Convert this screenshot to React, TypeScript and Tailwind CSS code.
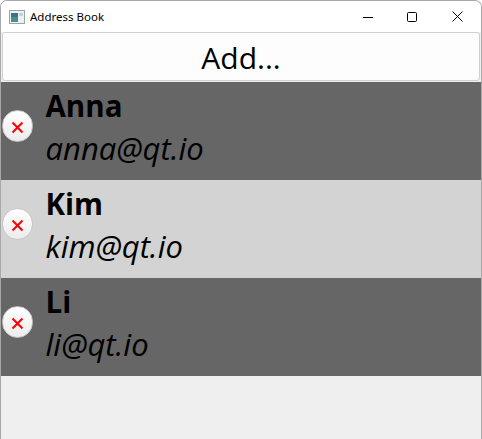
const FONT = "font-['Open_Sans','Noto_Sans',sans-serif]";

const contacts = [
  { name: "Anna", email: "anna@qt.io", bg: "bg-[#666666]" },
  { name: "Kim", email: "kim@qt.io", bg: "bg-[#d3d3d3]" },
  { name: "Li", email: "li@qt.io", bg: "bg-[#666666]" },
];

function AppIcon() {
  return (
    <svg width="16" height="14" viewBox="0 0 16 14">
      <rect x="0.5" y="0.5" width="15" height="13" fill="#eef1f1" stroke="#9aa5a8" />
      <rect x="2" y="3" width="7" height="9" fill="#4f8f88" />
      <rect x="2" y="3" width="7" height="4" fill="#3f6f8f" />
      <rect x="10" y="3" width="4" height="3" fill="#c4d2d2" />
    </svg>
  );
}

function TitleBar() {
  return (
    <div className="flex h-[31px] items-center bg-white">
      <div className="ml-[8px] flex w-[21px] items-center">
        <AppIcon />
      </div>
      <span className="font-['Noto_Sans',sans-serif] text-[11.5px] text-black">Address Book</span>
      <div className="ml-auto flex items-center">
        <svg className="mr-[34px]" width="10" height="10" viewBox="0 0 10 10">
          <path d="M0 5.5H10" stroke="#000" strokeWidth="1" />
        </svg>
        <svg className="mr-[35px]" width="10" height="10" viewBox="0 0 10 10">
          <rect x="0.5" y="0.5" width="9" height="9" rx="1" fill="none" stroke="#000" />
        </svg>
        <svg className="mr-[18px]" width="11" height="11" viewBox="0 0 11 11">
          <path d="M0.5 0.5L10.5 10.5M10.5 0.5L0.5 10.5" stroke="#000" strokeWidth="1" />
        </svg>
      </div>
    </div>
  );
}

function DeleteButton() {
  return (
    <button className="flex h-[32px] w-[31px] shrink-0 items-center justify-center rounded-full border border-[#c8c8c8] bg-gradient-to-b from-white to-[#ececec]">
      <svg className="mt-[2px]" width="13" height="13" viewBox="0 0 13 13">
        <path d="M1.5 1.5L11.5 11.5M11.5 1.5L1.5 11.5" stroke="#ff0000" strokeWidth="2" />
      </svg>
    </button>
  );
}

export default function App() {
  return (
    <div className={`flex h-[439px] w-[482px] flex-col overflow-hidden rounded-t-[7px] border border-b-0 border-[#a8a8a8] bg-[#efefef] ${FONT}`}>
      <TitleBar />
      <div className="flex flex-col bg-[#f0f0f0]">
        <div className="px-[1px] pb-[1px]">
          <button className={`block h-[49px] w-full rounded-[3px] border border-[#d0d0d0] bg-[#fdfdfd] pt-[2px] text-[30px] leading-none text-black ${FONT}`}>
            Add...
          </button>
        </div>
        {contacts.map(c => (
          <div key={c.name} className={`flex h-[98px] items-center ${c.bg}`}>
            <div className="mb-[10px] ml-[1px]">
              <DeleteButton />
            </div>
            <div className="ml-[12.5px] flex h-full flex-col pt-[4px]">
              <span className="text-[29.5px] leading-[40px] font-bold text-black">{c.name}</span>
              <span className="mt-[2px] text-[31px] leading-[40px] text-black italic">{c.email}</span>
            </div>
          </div>
        ))}
      </div>
    </div>
  );
}
